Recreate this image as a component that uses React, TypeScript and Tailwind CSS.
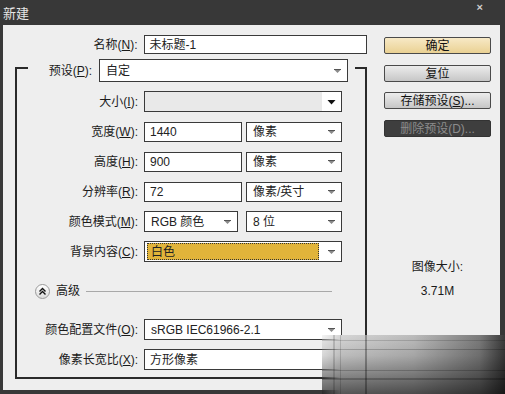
import React from "react";

const font = "font-['Liberation_Sans','Noto_Sans_CJK_SC',sans-serif]";

const Arrow = ({ dark }: { dark?: boolean }) => (
  <svg width="9" height="6" viewBox="0 0 9 6" className="shrink-0">
    {dark ? (
      <path d="M0.5 1 H8.5 L4.5 5.5 Z" fill="#111" />
    ) : (
      <>
        <path d="M1 1.5 H8 L4.5 5 Z" fill="#8a8a8a" />
        <path d="M1 1.5 H8" stroke="#555" strokeWidth="1" />
      </>
    )}
  </svg>
);

const Label = ({ text, k }: { text: string; k: string }) => (
  <div className="w-[124px] shrink-0 pr-[3px] text-right text-[12px] text-[#1a1a1a]">
    {text}(<u>{k}</u>):
  </div>
);

const Input = ({ value, w }: { value: string; w: string }) => (
  <div className={`${w} flex h-full items-center border border-[#3a3a3a] bg-white px-[5px] text-[12px] text-[#222]`}>
    {value}
  </div>
);

const Select = ({ value, w, hl }: { value: string; w: string; hl?: boolean }) => (
  <div className={`${w} flex h-full items-center border border-[#3a3a3a] bg-white pr-[5px] text-[12px] text-[#222]`}>
    {hl ? (
      <div className="ml-[2px] mr-[8px] flex h-[17px] flex-1 items-center border border-dotted border-[#333] bg-[#e1b43a] px-[3px]">
        {value}
      </div>
    ) : (
      <div className="flex-1 px-[6px]">{value}</div>
    )}
    <Arrow />
  </div>
);

const Row = ({ children, mt = "mt-[9px]" }: { children: React.ReactNode; mt?: string }) => (
  <div className={`${mt} flex h-[21px] items-center`}>{children}</div>
);

export default function App() {
  return (
    <div className={`${font} relative flex h-[394px] w-[505px] flex-col overflow-hidden bg-[#383838]`}>
      {/* title bar */}
      <div className="flex h-[25px] items-start justify-between pl-[3px] pr-[22px]">
        <span className="mt-[4px] text-[13px] text-[#e6e6e6]">新建</span>
        <span className="mt-[2px] text-[11px] font-bold leading-none text-[#cfcfcf]">×</span>
      </div>

      <div className="mb-[4px] ml-[3px] mr-[5px] flex flex-1 bg-[#eeeeee]">
        {/* left */}
        <div className="w-[364px] shrink-0">
          <div className="mt-[10px] flex h-[19px] items-center">
            <div className="w-[138px] pr-[3px] text-right text-[12px] text-[#1a1a1a]">
              名称(<u>N</u>):
            </div>
            <div className="ml-[3px] flex h-full w-[224px] items-center border border-[#3a3a3a] bg-white px-[5px] text-[12px] text-[#222]">
              未标题-1
            </div>
          </div>

          <div className="ml-[12px] mt-[13px] w-[352px] border-2 border-[#2a2a2a] pb-[7px]">
            <div className="relative -mt-[10px] ml-[11px] mr-[10px] flex h-[23px] items-center bg-[#eeeeee] pr-[7px]">
              <div className="w-[64px] text-right text-[12px] text-[#1a1a1a]">
                预设(<u>P</u>):
              </div>
              <div className="ml-[7px] flex h-full w-[249px] items-center border border-[#3a3a3a] bg-white pr-[5px] text-[12px] text-[#222]">
                <div className="flex-1 px-[6px]">自定</div>
                <Arrow />
              </div>
            </div>

            <Row>
              <Label text="大小" k="I" />
              <div className="ml-[3px] flex h-full w-[198px] border border-[#3a3a3a] bg-white">
                <div className="flex-1 bg-[#e9e9e9]" />
                <div className="flex w-[19px] items-center justify-center">
                  <Arrow dark />
                </div>
              </div>
            </Row>
            <Row>
              <Label text="宽度" k="W" />
              <div className="ml-[3px] flex h-[20px] gap-[4px]">
                <Input value="1440" w="w-[98px]" />
                <Select value="像素" w="w-[96px]" />
              </div>
            </Row>
            <Row>
              <Label text="高度" k="H" />
              <div className="ml-[3px] flex h-[20px] gap-[4px]">
                <Input value="900" w="w-[98px]" />
                <Select value="像素" w="w-[96px]" />
              </div>
            </Row>
            <Row>
              <Label text="分辨率" k="R" />
              <div className="ml-[3px] flex h-[20px] gap-[4px]">
                <Input value="72" w="w-[98px]" />
                <Select value="像素/英寸" w="w-[96px]" />
              </div>
            </Row>
            <Row>
              <Label text="颜色模式" k="M" />
              <div className="ml-[3px] flex h-full gap-[8px]">
                <Select value="RGB 颜色" w="w-[94px]" />
                <Select value="8 位" w="w-[96px]" />
              </div>
            </Row>
            <Row>
              <Label text="背景内容" k="C" />
              <div className="ml-[3px] h-full">
                <Select value="白色" w="w-[198px]" hl />
              </div>
            </Row>

            <div className="mt-[21px] flex h-[16px] items-center pl-[18px] pr-[33px]">
              <div className="flex h-[15px] w-[15px] items-center justify-center rounded-full border border-[#9a9a9a] bg-[linear-gradient(#ffffff,#dcdcdc)]">
                <svg width="9" height="9" viewBox="0 0 9 9">
                  <path d="M1.5 4.5 L4.5 1.5 L7.5 4.5 M1.5 7.5 L4.5 4.5 L7.5 7.5" fill="none" stroke="#111" strokeWidth="1.4" />
                </svg>
              </div>
              <span className="ml-[6px] text-[12px] text-[#1a1a1a]">高级</span>
              <div className="ml-[6px] h-px flex-1 bg-[#a8a8a8]" />
            </div>

            <Row mt="mt-[20px]">
              <Label text="颜色配置文件" k="O" />
              <div className="ml-[3px] h-full">
                <Select value="sRGB IEC61966-2.1" w="w-[198px]" />
              </div>
            </Row>
            <Row>
              <Label text="像素长宽比" k="X" />
              <div className="ml-[3px] h-full">
                <Input value="方形像素" w="w-[198px]" />
              </div>
            </Row>
          </div>
        </div>

        {/* right */}
        <div className="flex flex-1 flex-col pl-[17px] text-[12px]">
          <button className="mt-[12px] h-[17px] w-[107px] rounded-[2px] border border-[#4a4a4a] bg-[linear-gradient(#f7e9c6,#ead193)] leading-none text-[#111]">
            确定
          </button>
          <button className="mt-[11px] h-[17px] w-[107px] rounded-[2px] border border-[#4a4a4a] bg-[linear-gradient(#ececec,#c6c6c6)] leading-none text-[#111]">
            复位
          </button>
          <button className="mt-[10px] h-[17px] w-[107px] rounded-[2px] border border-[#4a4a4a] bg-[linear-gradient(#ececec,#c6c6c6)] leading-none text-[#111]">
            存储预设(<u>S</u>)...
          </button>
          <button className="mt-[11px] h-[17px] w-[107px] rounded-[2px] border border-[#333] bg-[#3e3e3e] leading-none text-[#8c8c8c]">
            删除预设(D)...
          </button>
          <div className="mt-[121px] w-[107px] text-center text-[12px] text-[#1a1a1a]">图像大小:</div>
          <div className="mt-[6px] w-[107px] text-center text-[12px] text-[#1a1a1a]">3.71M</div>
        </div>
      </div>

      {/* smeared corner */}
      <div className="absolute left-[322px] top-[335px] h-[59px] w-[183px] bg-[linear-gradient(to_right,rgba(220,220,220,0.3)_0%,#d6d6d6_10%,#bcbcbc_50%,#7c7c7c_86%,#3a3a3a_100%)]">
        <div className="absolute inset-0 bg-[linear-gradient(to_bottom,rgba(0,0,0,0)_0%,rgba(0,0,0,0.12)_35%,rgba(0,0,0,0.6)_100%)]" />
        <div className="absolute left-0 right-0 top-[5px] h-px bg-[rgba(0,0,0,0.15)]" />
        <div className="absolute left-0 right-0 top-[14px] h-px bg-[rgba(0,0,0,0.2)]" />
        <div className="absolute left-0 right-0 top-[35px] h-px bg-[rgba(0,0,0,0.2)]" />
        <div className="absolute left-0 right-0 top-[43px] h-[2px] bg-[rgba(0,0,0,0.22)]" />
        <div className="absolute bottom-0 left-[11px] top-0 w-[2px] bg-[rgba(0,0,0,0.15)]" />
        <div className="absolute bottom-0 left-[18px] top-0 w-px bg-[rgba(0,0,0,0.15)]" />
        <div className="absolute bottom-0 left-[43px] top-0 w-[2px] bg-[rgba(0,0,0,0.3)]" />
      </div>
    </div>
  );
}
